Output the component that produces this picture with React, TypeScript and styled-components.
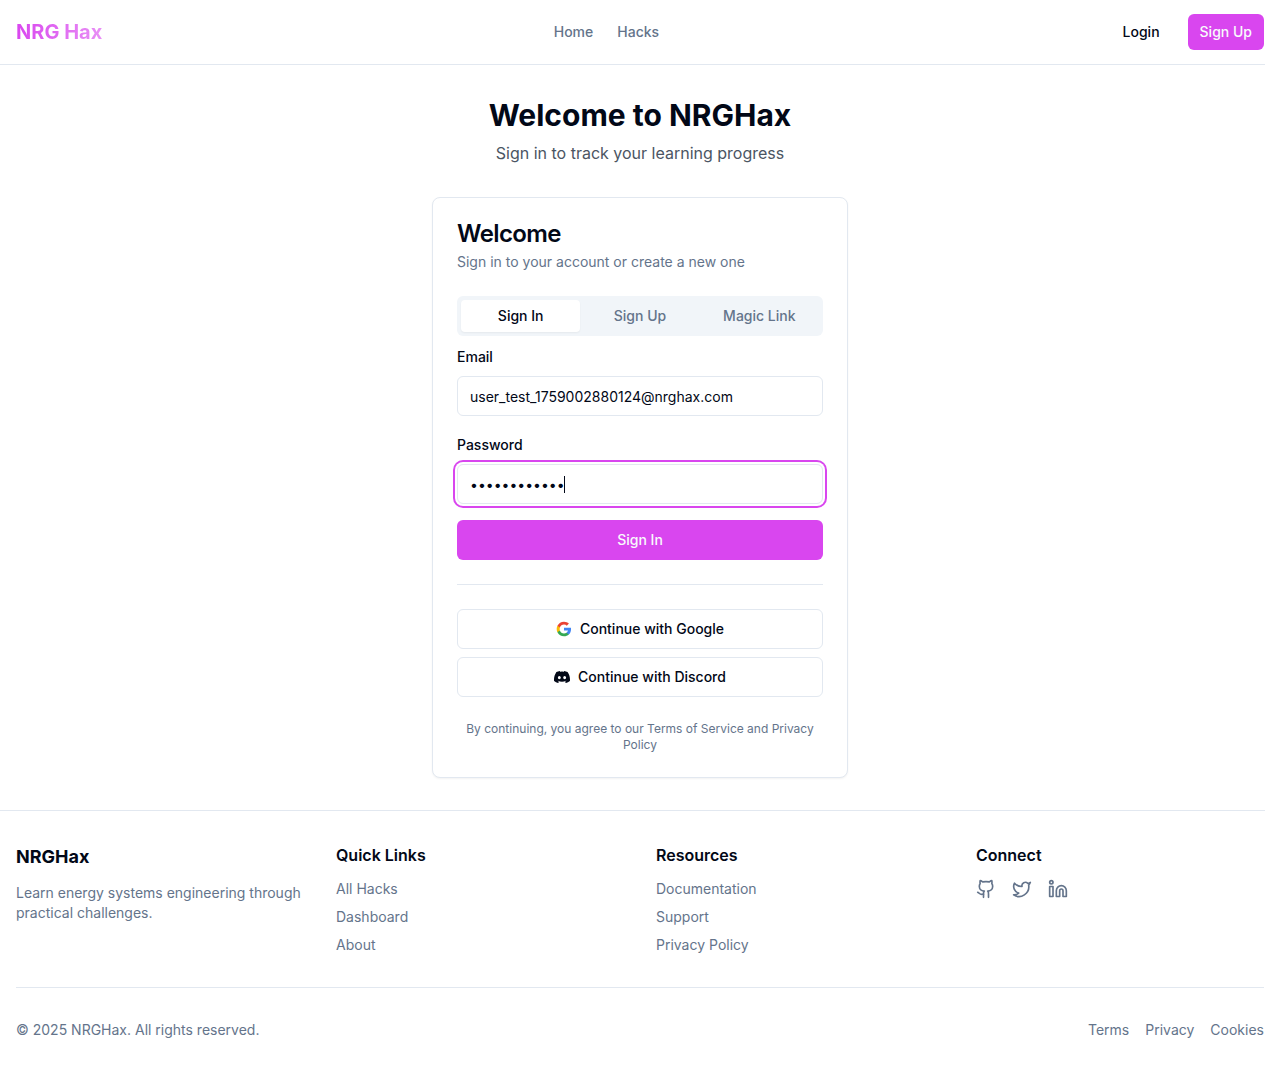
import React from 'react';
import styled, { createGlobalStyle, css } from 'styled-components';
import { Github, Twitter, Linkedin } from 'lucide-react';

const color = {
  background: '#ffffff',
  foreground: '#020817',
  muted: '#f1f5f9',
  mutedText: '#64748b',
  subtitle: '#4b5563',
  border: '#e2e8f0',
  primary: '#d946ef',
  primaryText: '#f8fafc',
};

const GlobalStyle = createGlobalStyle`
  *, *::before, *::after { box-sizing: border-box; }
  html { overflow: hidden; }
  body {
    margin: 0;
    overflow: hidden;
    background: ${color.background};
    color: ${color.foreground};
    font-family: Inter, 'Liberation Sans', sans-serif;
    font-size: 16px;
    line-height: 24px;
  }
  h1, h2, h3, h4, p, ul { margin: 0; padding: 0; }
  ul { list-style: none; }
  a { color: inherit; text-decoration: none; }
  button, input { font-family: inherit; }
`;

const Page = styled.div`
  width: 1280px;
  min-height: 1072px;
  display: flex;
  flex-direction: column;
`;

const Header = styled.header`
  height: 65px;
  padding: 0 16px;
  border-bottom: 1px solid ${color.border};
  display: flex;
  align-items: center;
  justify-content: space-between;
`;

const Logo = styled.a`
  font-size: 20px;
  line-height: 28px;
  font-weight: 700;
  color: transparent;
  background: linear-gradient(to right, ${color.primary}, #e88ff5);
  background-clip: text;
  -webkit-background-clip: text;
`;

const Nav = styled.nav`
  display: flex;
  gap: 24px;
`;

const NavLink = styled.a`
  font-size: 14px;
  line-height: 20px;
  font-weight: 500;
  color: ${color.mutedText};
`;

const HeaderActions = styled.div`
  display: flex;
  gap: 16px;
`;

type Variant = 'primary' | 'outline' | 'ghost';

const variants = {
  primary: css`
    background: ${color.primary};
    color: ${color.primaryText};
  `,
  outline: css`
    background: ${color.background};
    color: ${color.foreground};
    border: 1px solid ${color.border};
  `,
  ghost: css`
    background: transparent;
    color: ${color.foreground};
  `,
};

const Button = styled.button<{ $variant: Variant; $small?: boolean }>`
  display: flex;
  align-items: center;
  justify-content: center;
  gap: 8px;
  width: ${({ $small }) => ($small ? 'auto' : '100%')};
  height: ${({ $small }) => ($small ? 36 : 40)}px;
  padding: 0 ${({ $small }) => ($small ? 12 : 16)}px;
  border: 0;
  border-radius: 6px;
  font-size: 14px;
  line-height: 20px;
  font-weight: 500;
  white-space: nowrap;
  cursor: pointer;
  ${({ $variant }) => variants[$variant]}
`;

const Main = styled.main`
  width: 448px;
  margin: 0 auto;
  padding: 32px 16px;
`;

const Intro = styled.div`
  margin-bottom: 32px;
  text-align: center;
`;

const Title = styled.h1`
  font-size: 30px;
  line-height: 36px;
  font-weight: 700;
`;

const Subtitle = styled.p`
  margin-top: 8px;
  color: ${color.subtitle};
`;

const Card = styled.section`
  padding: 24px;
  border: 1px solid ${color.border};
  border-radius: 8px;
  background: ${color.background};
  box-shadow: 0 1px 2px 0 rgba(0, 0, 0, 0.05);
`;

const CardHeader = styled.div`
  display: flex;
  flex-direction: column;
  gap: 6px;
  margin-bottom: 24px;
`;

const CardTitle = styled.h3`
  font-size: 24px;
  line-height: 24px;
  font-weight: 600;
  letter-spacing: -0.6px;
`;

const CardDescription = styled.p`
  font-size: 14px;
  line-height: 20px;
  color: ${color.mutedText};
`;

const TabList = styled.div`
  display: grid;
  grid-template-columns: repeat(3, 1fr);
  height: 40px;
  padding: 4px;
  border-radius: 6px;
  background: ${color.muted};
`;

const Tab = styled.button<{ $active?: boolean }>`
  padding: 0 12px;
  border: 0;
  border-radius: 4px;
  font-size: 14px;
  line-height: 20px;
  font-weight: 500;
  cursor: pointer;
  color: ${({ $active }) => ($active ? color.foreground : color.mutedText)};
  background: ${({ $active }) => ($active ? color.background : 'transparent')};
  box-shadow: ${({ $active }) => ($active ? '0 1px 2px 0 rgba(0, 0, 0, 0.05)' : 'none')};
`;

const Form = styled.form`
  display: flex;
  flex-direction: column;
  gap: 16px;
  margin-top: 8px;
`;

const Field = styled.div`
  display: flex;
  flex-direction: column;
  gap: 8px;
`;

const LabelRow = styled.div`
  height: 24px;
`;

const Label = styled.label`
  font-size: 14px;
  line-height: 14px;
  font-weight: 500;
`;

const InputWrap = styled.div`
  position: relative;
  display: flex;
`;

const Input = styled.input<{ $focused?: boolean }>`
  width: 100%;
  height: 40px;
  padding: 8px 12px;
  border: 1px solid ${color.border};
  border-radius: 6px;
  outline: none;
  background: ${color.background};
  color: ${color.foreground};
  font-size: 14px;
  line-height: 20px;
  box-shadow: ${({ $focused }) =>
    $focused ? `0 0 0 2px ${color.background}, 0 0 0 4px ${color.primary}` : 'none'};
`;

const Caret = styled.span`
  position: absolute;
  left: 107px;
  top: 12px;
  width: 1px;
  height: 17px;
  background: ${color.foreground};
`;

const Separator = styled.div`
  height: 1px;
  margin: 24px 0;
  background: ${color.border};
`;

const Providers = styled.div`
  display: flex;
  flex-direction: column;
  gap: 8px;
`;

const Legal = styled.p`
  margin-top: 24px;
  text-align: center;
  font-size: 12px;
  line-height: 16px;
  color: ${color.mutedText};
`;

const Footer = styled.footer`
  padding: 32px 16px;
  border-top: 1px solid ${color.border};
`;

const FooterGrid = styled.div`
  display: grid;
  grid-template-columns: repeat(4, 1fr);
  gap: 32px;
`;

const FooterColumn = styled.div`
  display: flex;
  flex-direction: column;
  gap: 12px;
`;

const FooterBrand = styled.h3`
  font-size: 18px;
  line-height: 28px;
  font-weight: 700;
`;

const FooterHeading = styled.h4`
  font-size: 16px;
  line-height: 24px;
  font-weight: 600;
`;

const FooterText = styled.p`
  font-size: 14px;
  line-height: 20px;
  color: ${color.mutedText};
`;

const FooterLinks = styled.ul`
  display: flex;
  flex-direction: column;
  gap: 8px;
  font-size: 14px;
  line-height: 20px;
  color: ${color.mutedText};
`;

const Inline = styled.div`
  display: flex;
  gap: 16px;
  font-size: 14px;
  line-height: 20px;
  color: ${color.mutedText};
`;

const IconLink = styled.a`
  display: flex;
`;

const FooterBottom = styled.div`
  display: flex;
  justify-content: space-between;
  margin-top: 32px;
  padding-top: 32px;
  border-top: 1px solid ${color.border};
`;

const GoogleIcon = () => (
  <svg width="16" height="16" viewBox="0 0 24 24" aria-hidden="true">
    <path fill="#4285F4" d="M22.56 12.25c0-.78-.07-1.53-.2-2.25H12v4.26h5.92c-.26 1.37-1.04 2.53-2.21 3.31v2.77h3.57c2.08-1.92 3.28-4.74 3.28-8.09z" />
    <path fill="#34A853" d="M12 23c2.97 0 5.46-.98 7.28-2.66l-3.57-2.77c-.98.66-2.23 1.06-3.71 1.06-2.86 0-5.29-1.93-6.16-4.53H2.18v2.84C3.99 20.53 7.7 23 12 23z" />
    <path fill="#FBBC05" d="M5.84 14.09c-.22-.66-.35-1.36-.35-2.09s.13-1.43.35-2.09V7.07H2.18C1.43 8.55 1 10.22 1 12s.43 3.45 1.18 4.93l2.85-2.22.81-.62z" />
    <path fill="#EA4335" d="M12 5.38c1.62 0 3.06.56 4.21 1.64l3.15-3.15C17.45 2.09 14.97 1 12 1 7.7 1 3.99 3.47 2.18 7.07l3.66 2.84c.87-2.6 3.3-4.53 6.16-4.53z" />
  </svg>
);

const DiscordIcon = () => (
  <svg width="16" height="16" viewBox="0 0 24 24" fill="currentColor" aria-hidden="true">
    <path d="M20.317 4.37a19.791 19.791 0 0 0-4.885-1.515.074.074 0 0 0-.079.037c-.21.375-.444.864-.608 1.25a18.27 18.27 0 0 0-5.487 0 12.64 12.64 0 0 0-.617-1.25.077.077 0 0 0-.079-.037A19.736 19.736 0 0 0 3.677 4.37a.07.07 0 0 0-.032.027C.533 9.046-.32 13.58.099 18.057a.082.082 0 0 0 .031.057 19.9 19.9 0 0 0 5.993 3.03.078.078 0 0 0 .084-.028c.462-.63.874-1.295 1.226-1.994a.076.076 0 0 0-.041-.106 13.107 13.107 0 0 1-1.872-.892.077.077 0 0 1-.008-.128 10.2 10.2 0 0 0 .372-.292.074.074 0 0 1 .077-.01c3.928 1.793 8.18 1.793 12.062 0a.074.074 0 0 1 .078.01c.12.098.246.198.373.292a.077.077 0 0 1-.006.127 12.299 12.299 0 0 1-1.873.892.077.077 0 0 0-.041.107c.36.698.772 1.362 1.225 1.993a.076.076 0 0 0 .084.028 19.839 19.839 0 0 0 6.002-3.03.077.077 0 0 0 .032-.054c.5-5.177-.838-9.674-3.549-13.66a.061.061 0 0 0-.031-.03zM8.02 15.33c-1.183 0-2.157-1.085-2.157-2.419 0-1.333.956-2.419 2.157-2.419 1.21 0 2.176 1.096 2.157 2.42 0 1.333-.956 2.418-2.157 2.418zm7.975 0c-1.183 0-2.157-1.085-2.157-2.419 0-1.333.955-2.419 2.157-2.419 1.21 0 2.176 1.096 2.157 2.42 0 1.333-.946 2.418-2.157 2.418z" />
  </svg>
);

const quickLinks = ['All Hacks', 'Dashboard', 'About'];
const resources = ['Documentation', 'Support', 'Privacy Policy'];
const legalLinks = ['Terms', 'Privacy', 'Cookies'];
const socials = [
  { name: 'GitHub', Icon: Github },
  { name: 'Twitter', Icon: Twitter },
  { name: 'LinkedIn', Icon: Linkedin },
];

const LinkColumn = ({ title, links }: { title: string; links: string[] }) => (
  <FooterColumn>
    <FooterHeading>{title}</FooterHeading>
    <FooterLinks>
      {links.map((link) => (
        <li key={link}>
          <a href="#">{link}</a>
        </li>
      ))}
    </FooterLinks>
  </FooterColumn>
);

export default function App() {
  return (
    <>
      <GlobalStyle />
      <Page>
        <Header>
          <Logo href="#">NRG Hax</Logo>
          <Nav>
            <NavLink href="#">Home</NavLink>
            <NavLink href="#">Hacks</NavLink>
          </Nav>
          <HeaderActions>
            <Button $variant="ghost" $small>Login</Button>
            <Button $variant="primary" $small>Sign Up</Button>
          </HeaderActions>
        </Header>

        <Main>
          <Intro>
            <Title>Welcome to NRGHax</Title>
            <Subtitle>Sign in to track your learning progress</Subtitle>
          </Intro>

          <Card>
            <CardHeader>
              <CardTitle>Welcome</CardTitle>
              <CardDescription>Sign in to your account or create a new one</CardDescription>
            </CardHeader>

            <TabList role="tablist">
              <Tab role="tab" $active>Sign In</Tab>
              <Tab role="tab">Sign Up</Tab>
              <Tab role="tab">Magic Link</Tab>
            </TabList>

            <Form onSubmit={(e) => e.preventDefault()}>
              <Field>
                <LabelRow>
                  <Label htmlFor="email">Email</Label>
                </LabelRow>
                <Input id="email" type="email" defaultValue="user_test_1759002880124@nrghax.com" />
              </Field>
              <Field>
                <LabelRow>
                  <Label htmlFor="password">Password</Label>
                </LabelRow>
                <InputWrap>
                  <Input id="password" type="password" defaultValue="Password123!" $focused />
                  <Caret />
                </InputWrap>
              </Field>
              <Button $variant="primary" type="submit">Sign In</Button>
            </Form>

            <Separator />

            <Providers>
              <Button $variant="outline">
                <GoogleIcon />
                Continue with Google
              </Button>
              <Button $variant="outline">
                <DiscordIcon />
                Continue with Discord
              </Button>
            </Providers>

            <Legal>By continuing, you agree to our Terms of Service and Privacy Policy</Legal>
          </Card>
        </Main>

        <Footer>
          <FooterGrid>
            <FooterColumn>
              <FooterBrand>NRGHax</FooterBrand>
              <FooterText>Learn energy systems engineering through practical challenges.</FooterText>
            </FooterColumn>
            <LinkColumn title="Quick Links" links={quickLinks} />
            <LinkColumn title="Resources" links={resources} />
            <FooterColumn>
              <FooterHeading>Connect</FooterHeading>
              <Inline>
                {socials.map(({ name, Icon }) => (
                  <IconLink key={name} href="#" aria-label={name}>
                    <Icon size={20} />
                  </IconLink>
                ))}
              </Inline>
            </FooterColumn>
          </FooterGrid>
          <FooterBottom>
            <FooterText>© 2025 NRGHax. All rights reserved.</FooterText>
            <Inline>
              {legalLinks.map((link) => (
                <a key={link} href="#">{link}</a>
              ))}
            </Inline>
          </FooterBottom>
        </Footer>
      </Page>
    </>
  );
}
